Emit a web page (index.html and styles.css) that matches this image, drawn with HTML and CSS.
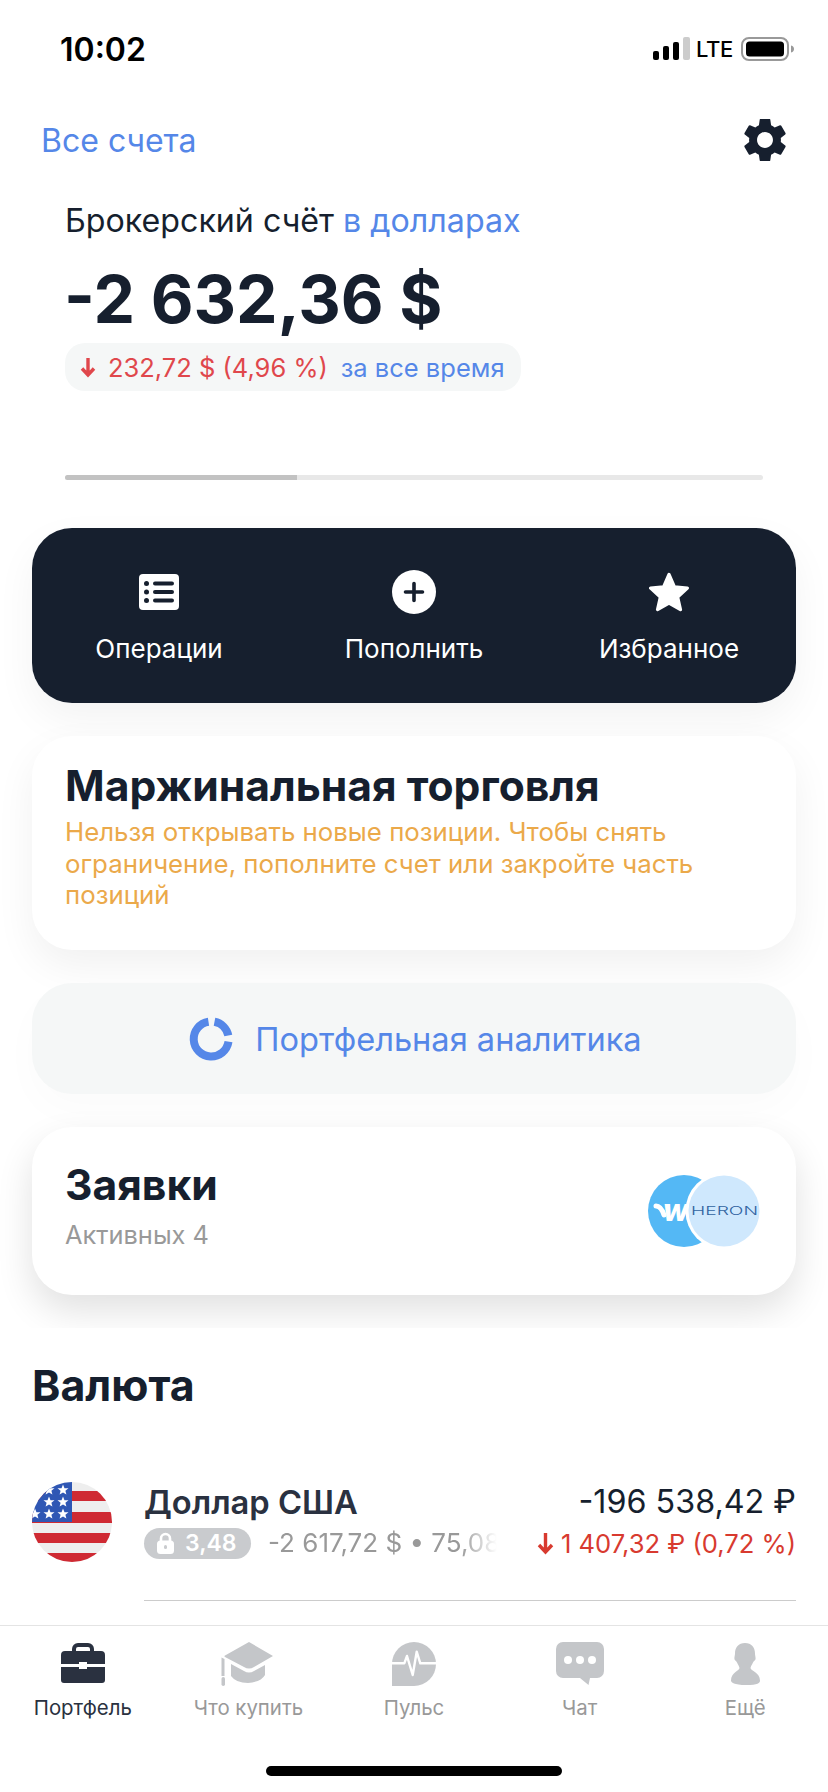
FILE: index.html
```html
<!DOCTYPE html>
<html lang="ru">
<head>
<meta charset="utf-8">
<title>Портфель</title>
<link rel="stylesheet" href="styles.css">
</head>
<body>
<div class="app">
  <header class="status">
    <span class="time">10:02</span>
    <div class="status-right">
      <svg class="signal" width="37" height="24" viewBox="0 0 37 24"><rect x="0" y="14" width="6" height="9" rx="2"/><rect x="10" y="9" width="6" height="14" rx="2"/><rect x="20" y="5" width="6" height="18" rx="2"/><rect class="signal-off" x="30" y="0" width="7" height="23" rx="2"/></svg>
      <span class="lte">LTE</span>
      <svg class="battery" width="54" height="26" viewBox="0 0 54 26"><rect x="1" y="2" width="46" height="22" rx="7" fill="none" stroke="#999" stroke-width="2"/><rect x="5" y="5.500" width="38" height="15" rx="3.500" fill="#000"/><path d="M50 9.500c2.500 .6 3 2 3 3.500s-.5 2.900-3 3.500z" fill="#999"/></svg>
    </div>
  </header>

  <div class="nav">
    <span class="nav-link">Все счета</span>
    <svg class="gear" width="42" height="42" viewBox="2.500 2.500 19 19"><path d="M19.140 12.940c.04-.3.06-.61.06-.94 0-.32-.02-.64-.07-.94l2.030-1.580c.18-.14.23-.41.12-.61l-1.920-3.320c-.12-.22-.37-.29-.59-.22l-2.390.96c-.5-.38-1.030-.7-1.620-.94l-.36-2.540c-.04-.24-.24-.41-.48-.41h-3.840c-.24 0-.43.17-.47.41l-.36 2.540c-.59.24-1.130.57-1.620.94l-2.390-.96c-.22-.08-.47 0-.59.22L2.740 8.870c-.12.21-.08.47.12.61l2.030 1.580c-.05.3-.09.63-.09.94s.02.64.07.94l-2.030 1.580c-.18.14-.23.41-.12.61l1.920 3.320c.12.22.37.29.59.22l2.390-.96c.5.38 1.030.7 1.620.94l.36 2.540c.05.24.24.41.48.41h3.840c.24 0 .44-.17.47-.41l.36-2.540c.59-.24 1.130-.56 1.620-.94l2.390.96c.22.08.47 0 .59-.22l1.920-3.320c.12-.22.07-.47-.12-.61l-2.010-1.580zM12 15.600c-1.980 0-3.600-1.620-3.600-3.600s1.620-3.600 3.600-3.600 3.600 1.620 3.600 3.600-1.620 3.600-3.600 3.600z"/></svg>
  </div>

  <section class="balance">
    <p class="account">Брокерский счёт <span class="blue">в долларах</span></p>
    <p class="amount">-2 632,36 $</p>
    <div class="change">
      <svg class="arrow" width="16" height="22" viewBox="0 0 16 22"><path d="M8 2v17M2 12.500l6 6.500 6-6.500" fill="none" stroke="#e0474c" stroke-width="3.400"/></svg>
      <span class="change-red">232,72 $ (4,96 %)</span>
      <span class="change-blue">за все время</span>
    </div>
    <div class="progress"><div class="progress-fill"></div></div>
  </section>

  <section class="cards">
    <div class="actions">
      <div class="action">
        <svg width="40" height="36" viewBox="0 0 40 36"><rect width="40" height="36" rx="4" fill="#fff"/><g fill="#161f2e"><circle cx="7.500" cy="9.500" r="2.500"/><circle cx="7.500" cy="18" r="2.500"/><circle cx="7.500" cy="26.500" r="2.500"/><rect x="14" y="7.500" width="21" height="4" rx="2"/><rect x="14" y="16" width="21" height="4" rx="2"/><rect x="14" y="24.500" width="21" height="4" rx="2"/></g></svg>
        <span>Операции</span>
      </div>
      <div class="action">
        <svg width="44" height="44" viewBox="0 0 44 44"><circle cx="22" cy="22" r="22" fill="#fff"/><path d="M22 13.500v17M13.500 22h17" stroke="#161f2e" stroke-width="3.600" stroke-linecap="round"/></svg>
        <span>Пополнить</span>
      </div>
      <div class="action">
        <svg width="40" height="44" viewBox="1.500 1.500 37 35.500"><path d="M20 3l5 11.500 12 1.200-9 8.300 2.600 11.500L20 29.500 9.400 35.500 12 24l-9-8.300 12-1.200z" fill="#fff" stroke="#fff" stroke-width="3" stroke-linejoin="round"/></svg>
        <span>Избранное</span>
      </div>
    </div>

    <div class="card margin-card">
      <h2 class="card-title">Маржинальная торговля</h2>
      <p class="warning">Нельзя открывать новые позиции. Чтобы снять ограничение, пополните счет или закройте часть позиций</p>
    </div>

    <div class="analytics">
      <svg width="44" height="44" viewBox="0 0 44 44"><path d="M19.500 4.700a17.500 17.500 0 1 0 20 20" fill="none" stroke="#5587e8" stroke-width="8"/><path d="M25.500 4.700a17.500 17.500 0 0 1 13.800 13.800" fill="none" stroke="#5587e8" stroke-width="8"/></svg>
      <span>Портфельная аналитика</span>
    </div>

    <div class="card orders">
      <div>
        <h2 class="card-title orders-title">Заявки</h2>
        <p class="muted">Активных 4</p>
      </div>
      <div class="logos">
        <svg width="112" height="72" viewBox="0 0 112 72">
          <circle cx="36" cy="36" r="36" fill="#54b8f5"/>
          <text class="wish" x="15" y="46">w</text>
          <path d="M8 31c4 0 6 3 8 9" fill="none" stroke="#fff" stroke-width="5" stroke-linecap="round"/>
          <circle cx="76" cy="36" r="38.500" fill="#fff"/>
          <circle cx="76" cy="36" r="35.500" fill="#cfe8fd"/>
          <text class="heron" x="43" y="40" textLength="67" lengthAdjust="spacingAndGlyphs">HERON</text>
        </svg>
      </div>
    </div>
  </section>

  <section class="currency">
    <h2 class="section-title">Валюта</h2>
    <div class="row">
      <svg class="flag" width="80" height="80" viewBox="0 0 80 80">
        <defs>
          <clipPath id="flag-clip"><circle cx="40" cy="40" r="40"/></clipPath>
          <polygon id="flag-star" points="0,-5.500 1.500,-1.800 5.500,-1.700 2.400,.8 3.400,4.600 0,2.500 -3.400,4.600 -2.400,.8 -5.500,-1.700 -1.500,-1.800"/>
        </defs>
        <g clip-path="url(#flag-clip)">
          <rect width="80" height="80" fill="#eeeeee"/>
          <g fill="#cf2a33">
            <rect y="9" width="80" height="10"/><rect y="30" width="80" height="11"/><rect y="51" width="80" height="10"/><rect y="71" width="80" height="9"/>
          </g>
          <rect width="40" height="40" fill="#2f57b4"/>
          <g fill="#fff">
            <use href="#flag-star" x="17" y="8"/><use href="#flag-star" x="31" y="8"/>
            <use href="#flag-star" x="17" y="20"/><use href="#flag-star" x="31" y="20"/>
            <use href="#flag-star" x="3" y="32"/><use href="#flag-star" x="17" y="32"/><use href="#flag-star" x="31" y="32"/>
          </g>
        </g>
      </svg>
      <div class="row-body">
        <div class="row-line">
          <span class="row-name">Доллар США</span>
          <span class="row-value">-196 538,42 ₽</span>
        </div>
        <div class="row-line row-line-sub">
          <span class="rate-pill">
            <svg width="17" height="22" viewBox="0 0 17 22"><path d="M4 10V6.500a4.500 4.500 0 0 1 9 0V10" fill="none" stroke="#fff" stroke-width="2.600"/><rect y="8.500" width="17" height="13.500" rx="3.500" fill="#fff"/><rect x="7" y="13" width="3" height="4" rx="1.500" fill="#c9cbce"/></svg>
            3,48
          </span>
          <span class="row-detail">-2 617,72 $ • 75,08</span>
          <span class="row-change">
            <svg width="17" height="24" viewBox="0 0 17 24"><path d="M8.500 2v19M2 14l6.500 7 6.500-7" fill="none" stroke="#d83a2f" stroke-width="3.400"/></svg>
            1 407,32 ₽ (0,72 %)
          </span>
        </div>
      </div>
    </div>
  </section>

  <nav class="tabs">
    <div class="tab tab-active">
      <svg width="44" height="44" viewBox="0 0 44 44"><path d="M13 10V7a4 4 0 0 1 4-4h10a4 4 0 0 1 4 4v3" fill="none" stroke="#2a3140" stroke-width="4"/><path d="M4 9h36a4 4 0 0 1 4 4v9H26v-2h-8v2H0v-9a4 4 0 0 1 4-4z" fill="#2a3140"/><path d="M0 25h18v2h8v-2h18v13a3 3 0 0 1-3 3H3a3 3 0 0 1-3-3z" fill="#2a3140"/></svg>
      <span>Портфель</span>
    </div>
    <div class="tab">
      <svg width="54" height="44" viewBox="0 0 54 44"><path d="M28 0l24 14-19 11q-5 3-10 0L4 15q-1-1 0-1.500z" fill="#c4c6c9"/><path d="M0.500 15.500l3 1.500V34h-3z" fill="#c4c6c9"/><rect x="0.500" y="35" width="3.500" height="9" rx="1.750" fill="#c4c6c9"/><path d="M10 22l13 7q5 3 10 0l11-6v10q-4 7-17 8-12 0-17-7z" fill="#c4c6c9"/></svg>
      <span>Что купить</span>
    </div>
    <div class="tab">
      <svg width="44" height="44" viewBox="0 0 44 44"><path d="M22 0a22 22 0 1 1 0 44L9 44 0 44V22A22 22 0 0 1 22 0z" fill="#c4c6c9"/><path d="M9 41L0 44V30h9z" fill="#c4c6c9"/><path d="M0 21.300H12.300L15 14l5.700 19 4-23.300 3.600 11.600H44" fill="none" stroke="#fff" stroke-width="2.400" stroke-linejoin="round"/></svg>
      <span>Пульс</span>
    </div>
    <div class="tab">
      <svg width="48" height="44" viewBox="0 0 48 44"><path d="M7 0h34a7 7 0 0 1 7 7v22a7 7 0 0 1-7 7h-7l-1.500 7-8.500-7H7a7 7 0 0 1-7-7V7a7 7 0 0 1 7-7z" fill="#c4c6c9"/><g fill="#fff"><circle cx="12" cy="18" r="4"/><circle cx="24" cy="18" r="4"/><circle cx="36" cy="18" r="4"/></g></svg>
      <span>Чат</span>
    </div>
    <div class="tab">
      <svg width="30" height="42" viewBox="0 0 30 42"><path d="M15 0c6.500 0 10 4.500 10 10.500 0 2 .6 3 .6 5 0 2-1.600 2-2.600 4-1 2.300-2 3.300-2.500 5.500 0 2.500 9.500 4.500 9.500 12.500 0 2.500-2 4.500-14 4.500S1 39.500 1 37.500C1 29.500 9.500 27.500 9.500 25 9 22.800 8 21.800 7 19.500c-1-2-2.600-2-2.600-4 0-2 .6-3 .6-5C5 4.500 8.500 0 15 0z" fill="#c4c6c9"/></svg>
      <span>Ещё</span>
    </div>
  </nav>

  <div class="home-wrap"><div class="home-bar"></div></div>
</div>
</body>
</html>
```

FILE: styles.css
```css
* { box-sizing: border-box; margin: 0; padding: 0; }

html, body { background: #fff; }

body {
  font-family: Inter, "Noto Sans", sans-serif;
  color: #161f2e;
}

.app {
  width: 828px;
  height: 1792px;
  display: flex;
  flex-direction: column;
  overflow: hidden;
  background: #fff;
}

.status {
  height: 98px;
  flex: none;
  display: flex;
  align-items: center;
  justify-content: space-between;
  padding: 0 33px 0 60px;
  color: #000;
}

.time { font-size: 32px; font-weight: 600; letter-spacing: 0; }

.status-right { display: flex; align-items: center; gap: 6px; }

.signal { fill: #000; }
.signal-off { fill: #ccc; }

.lte { font-size: 22px; font-weight: 500; letter-spacing: -.3px; }

.battery { margin-left: 2px; }

.nav {
  height: 84px;
  flex: none;
  display: flex;
  align-items: center;
  justify-content: space-between;
  padding: 0 42px 0 41px;
}

.nav-link { font-size: 32px; color: #5587e8; }

.gear { fill: #161f2e; }

.balance { flex: none; padding: 19px 65px 0; height: 313px; }

.account { font-size: 32.200px; line-height: 40px; color: #161f2e; }

.blue { color: #5587e8; }

.amount {
  font-size: 66px;
  font-weight: 700;
  line-height: 80px;
  margin: 18px 0 0 -1px;
}

.change {
  display: inline-flex;
  align-items: center;
  height: 48px;
  margin-top: 4px;
  padding: 0 16px 0 15px;
  border-radius: 20px;
  background: #f5f7f7;
  font-size: 25.500px;
}

.arrow { margin-right: 12px; }

.change-red { color: #e0474c; }

.change-blue { color: #5587e8; margin-left: 13px; }

.progress {
  height: 5px;
  width: 698px;
  margin-top: 84px;
  border-radius: 3px;
  background: #e8e8e8;
  overflow: hidden;
}

.progress-fill { width: 232px; height: 100%; background: #c2c2c2; }

.cards {
  flex: none;
  height: 833px;
  padding: 33px 32px 0;
  display: flex;
  flex-direction: column;
  gap: 33px;
  overflow: hidden;
}

.actions {
  height: 175px;
  flex: none;
  border-radius: 40px;
  background: #161f2e;
  display: grid;
  grid-template-columns: repeat(3, 255px);
  justify-content: center;
  box-shadow: 0 16px 40px rgba(0, 0, 0, .05);
}

.action {
  display: flex;
  flex-direction: column;
  align-items: center;
  color: #fff;
  font-size: 26px;
  padding-top: 42px;
}

.action svg { height: 44px; }

.action span { margin-top: 17px; line-height: 36px; }

.card {
  flex: none;
  border-radius: 40px;
  background: #fff;
  box-shadow: 0 16px 40px rgba(0, 0, 0, .06);
}

.margin-card { height: 214px; padding: 23px 33px 0; }

.card-title { font-size: 42.600px; font-weight: 700; line-height: 54px; }

.warning {
  font-size: 25.800px;
  line-height: 31.500px;
  color: #eba94a;
  margin-top: 3px;
}

.analytics {
  height: 111px;
  flex: none;
  border-radius: 40px;
  background: #f5f7f7;
  display: flex;
  align-items: center;
  justify-content: center;
  gap: 22px;
  padding-left: 3px;
  font-size: 32.600px;
  color: #5587e8;
  box-shadow: 0 16px 40px rgba(0, 0, 0, .02);
}

.orders {
  height: 168px;
  display: flex;
  align-items: center;
  justify-content: space-between;
  padding: 0 36px 0 33px;
  box-shadow: 0 16px 36px rgba(0, 0, 0, .12);
}

.orders-title { line-height: 54px; margin-top: -13px; }

.muted { font-size: 25.400px; line-height: 32px; color: #999; margin-top: 7px; }

.logos svg { display: block; }

.wish { font-size: 30px; font-weight: 800; font-style: italic; fill: #fff; font-family: Inter, sans-serif; }

.heron { font-size: 11px; font-weight: 300; fill: #2f62a0; font-family: Inter, sans-serif; }

.currency { flex: 1; min-height: 0; overflow: hidden; padding: 30px 32px 0; }

.section-title { font-size: 42.900px; font-weight: 700; line-height: 54px; }

.row { display: flex; gap: 32px; margin-top: 70px; }

.flag { flex: none; }

.row-body { flex: 1; min-width: 0; height: 119px; border-bottom: 1px solid #ccc; }

.row-line { display: flex; justify-content: space-between; align-items: center; height: 38px; padding-top: 1px; }

.row-line-sub { margin-top: 7px; height: 32px; padding-top: 0; }

.row-name { font-size: 32.700px; font-weight: 600; color: #2a3140; }

.row-value { font-size: 32.300px; color: #161f2e; }

.rate-pill {
  flex: none;
  display: inline-flex;
  align-items: center;
  gap: 11px;
  height: 31px;
  width: 107px;
  padding-left: 13px;
  border-radius: 16px;
  background: #c9cbce;
  color: #fff;
  font-size: 23px;
  font-weight: 600;
}

.row-detail {
  width: 229px;
  flex: none;
  margin-left: 17px;
  overflow: hidden;
  white-space: nowrap;
  font-size: 26px;
  line-height: 32px;
  color: #999;
  -webkit-mask-image: linear-gradient(90deg, #000 84%, transparent 100%);
  mask-image: linear-gradient(90deg, #000 84%, transparent 100%);
}

.row-change {
  margin-left: auto;
  display: inline-flex;
  align-items: center;
  gap: 7px;
  white-space: nowrap;
  font-size: 25.600px;
  color: #d83a2f;
}

.tabs {
  flex: none;
  height: 121px;
  padding-top: 16px;
  border-top: 1px solid #e4e4e4;
  display: grid;
  grid-template-columns: repeat(5, 1fr);
  background: #fff;
}

.tab {
  display: flex;
  flex-direction: column;
  align-items: center;
  font-size: 20.400px;
  color: #999;
}

.tab svg { height: 44px; display: block; }

.tab span { margin-top: 10px; line-height: 24px; }

.tab-active { color: #2a3140; }

.home-wrap { flex: none; height: 46px; display: flex; justify-content: center; }

.home-bar { width: 296px; height: 10px; border-radius: 5px; background: #000; margin-top: 20px; }
```
